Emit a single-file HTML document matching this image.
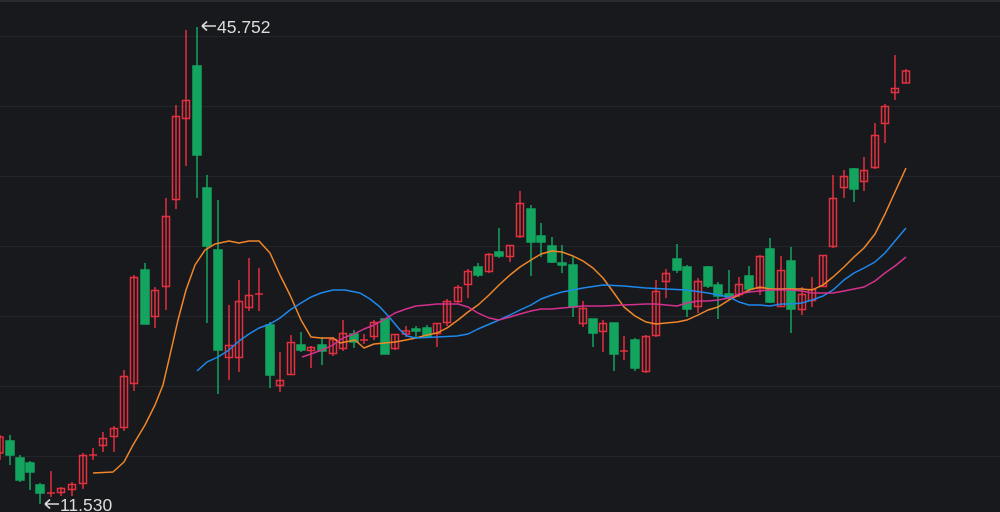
<!DOCTYPE html>
<html><head><meta charset="utf-8"><style>
html,body{margin:0;padding:0;background:#18191d;width:1000px;height:512px;overflow:hidden}
svg{display:block}
</style></head><body>
<svg width="1000" height="512" viewBox="0 0 1000 512" xmlns="http://www.w3.org/2000/svg">
<rect width="1000" height="512" fill="#18191d"/>
<rect width="1000" height="2" fill="#2a2b30"/>
<g stroke="#24252a" stroke-width="1">
<line x1="0" y1="36.5" x2="1000" y2="36.5"/><line x1="0" y1="106.5" x2="1000" y2="106.5"/><line x1="0" y1="176.5" x2="1000" y2="176.5"/><line x1="0" y1="246.5" x2="1000" y2="246.5"/><line x1="0" y1="316.5" x2="1000" y2="316.5"/><line x1="0" y1="386.5" x2="1000" y2="386.5"/><line x1="0" y1="456.5" x2="1000" y2="456.5"/>
</g>
<g fill="#13a55f" stroke="#13a55f" stroke-width="1.5">
<line x1="10" y1="435" x2="10" y2="465"/><rect x="6" y="441" width="8" height="14"/>
<line x1="20" y1="455" x2="20" y2="482"/><rect x="16" y="458" width="8" height="22"/>
<line x1="30" y1="461" x2="30" y2="490"/><rect x="26" y="463" width="8" height="9"/>
<line x1="40" y1="483" x2="40" y2="504"/><rect x="36" y="485" width="8" height="8"/>
<line x1="145" y1="263" x2="145" y2="324"/><rect x="141" y="270" width="8" height="54"/>
<line x1="197" y1="27" x2="197" y2="198"/><rect x="193" y="66" width="8" height="89"/>
<line x1="207" y1="175" x2="207" y2="323"/><rect x="203" y="188" width="8" height="58"/>
<line x1="218" y1="200" x2="218" y2="394"/><rect x="214" y="250" width="8" height="100"/>
<line x1="270" y1="322" x2="270" y2="388"/><rect x="266" y="325" width="8" height="50"/>
<line x1="301" y1="332" x2="301" y2="352"/><rect x="297" y="345" width="8" height="5"/>
<line x1="322" y1="337" x2="322" y2="365"/><rect x="318" y="345" width="8" height="6"/>
<line x1="354" y1="330" x2="354" y2="348"/><rect x="350" y="334" width="8" height="8"/>
<line x1="385" y1="319" x2="385" y2="354"/><rect x="381" y="319" width="8" height="35"/>
<line x1="416" y1="326" x2="416" y2="337"/><rect x="412" y="329" width="8" height="2"/>
<line x1="427" y1="325" x2="427" y2="337"/><rect x="423" y="328" width="8" height="8"/>
<line x1="478" y1="263" x2="478" y2="277"/><rect x="474" y="267" width="8" height="8"/>
<line x1="499" y1="228" x2="499" y2="258"/><rect x="495" y="252" width="8" height="4"/>
<line x1="531" y1="205" x2="531" y2="276"/><rect x="527" y="209" width="8" height="33"/>
<line x1="541" y1="223" x2="541" y2="257"/><rect x="537" y="236" width="8" height="6"/>
<line x1="552" y1="237" x2="552" y2="263"/><rect x="548" y="246" width="8" height="16"/>
<line x1="562" y1="245" x2="562" y2="273"/><rect x="558" y="263" width="8" height="2"/>
<line x1="573" y1="257" x2="573" y2="317"/><rect x="569" y="265" width="8" height="42"/>
<line x1="593" y1="319" x2="593" y2="347"/><rect x="589" y="319" width="8" height="14"/>
<line x1="614" y1="323" x2="614" y2="371"/><rect x="610" y="323" width="8" height="31"/>
<line x1="635" y1="338" x2="635" y2="371"/><rect x="631" y="340" width="8" height="28"/>
<line x1="677" y1="244" x2="677" y2="273"/><rect x="673" y="259" width="8" height="11"/>
<line x1="687" y1="265" x2="687" y2="317"/><rect x="683" y="267" width="8" height="42"/>
<line x1="708" y1="266" x2="708" y2="288"/><rect x="704" y="267" width="8" height="19"/>
<line x1="718" y1="282" x2="718" y2="319"/><rect x="714" y="285" width="8" height="11"/>
<line x1="729" y1="270" x2="729" y2="300"/><rect x="725" y="294" width="8" height="3"/>
<line x1="749" y1="266" x2="749" y2="293"/><rect x="745" y="276" width="8" height="13"/>
<line x1="770" y1="238" x2="770" y2="303"/><rect x="766" y="249" width="8" height="53"/>
<line x1="791" y1="247" x2="791" y2="333"/><rect x="787" y="261" width="8" height="48"/>
<line x1="854" y1="168" x2="854" y2="202"/><rect x="850" y="169" width="8" height="20"/>
</g>
<g fill="none" stroke="#e3313f" stroke-width="1.5">
<line x1="0" y1="435" x2="0" y2="460"/><rect x="-3" y="437" width="6" height="16"/>
<line x1="51" y1="471" x2="51" y2="497"/><line x1="47" y1="493" x2="55" y2="493"/>
<line x1="61" y1="487" x2="61" y2="496"/><rect x="57.5" y="488.5" width="7" height="4"/>
<line x1="72" y1="482" x2="72" y2="496"/><rect x="68.5" y="484.5" width="7" height="5"/>
<line x1="83" y1="453" x2="83" y2="489"/><rect x="79.5" y="455.5" width="7" height="28"/>
<line x1="93" y1="448" x2="93" y2="460"/><line x1="89" y1="455" x2="97" y2="455"/>
<line x1="103" y1="432" x2="103" y2="452"/><rect x="99.5" y="438.5" width="7" height="7"/>
<line x1="114" y1="426" x2="114" y2="452"/><rect x="110.5" y="428.5" width="7" height="8"/>
<line x1="124" y1="370" x2="124" y2="431"/><rect x="120.5" y="376.5" width="7" height="51"/>
<line x1="134" y1="275" x2="134" y2="391"/><rect x="130.5" y="277.5" width="7" height="106"/>
<line x1="155" y1="287" x2="155" y2="328"/><rect x="151.5" y="290.5" width="7" height="26"/>
<line x1="166" y1="198" x2="166" y2="310"/><rect x="162.5" y="216.5" width="7" height="70"/>
<line x1="176" y1="105" x2="176" y2="209"/><rect x="172.5" y="116.5" width="7" height="83"/>
<line x1="186" y1="30" x2="186" y2="166"/><rect x="182.5" y="100.5" width="7" height="18"/>
<line x1="229" y1="305" x2="229" y2="380"/><rect x="225.5" y="345.5" width="7" height="12"/>
<line x1="239" y1="280" x2="239" y2="372"/><rect x="235.5" y="301.5" width="7" height="56"/>
<line x1="249" y1="258" x2="249" y2="311"/><rect x="245.5" y="295.5" width="7" height="12"/>
<line x1="259" y1="268" x2="259" y2="311"/><line x1="255" y1="294" x2="263" y2="294"/>
<line x1="280" y1="352" x2="280" y2="392"/><rect x="276.5" y="380.5" width="7" height="5"/>
<line x1="291" y1="335" x2="291" y2="375"/><rect x="287.5" y="342.5" width="7" height="32"/>
<line x1="311" y1="346" x2="311" y2="368"/><rect x="307.5" y="347.5" width="7" height="3"/>
<line x1="333" y1="337" x2="333" y2="356"/><rect x="329.5" y="339.5" width="7" height="14"/>
<line x1="343" y1="320" x2="343" y2="351"/><rect x="339.5" y="333.5" width="7" height="15"/>
<line x1="364" y1="334" x2="364" y2="344"/><line x1="360" y1="340" x2="368" y2="340"/>
<line x1="374" y1="320" x2="374" y2="340"/><rect x="370.5" y="322.5" width="7" height="14"/>
<line x1="395" y1="334" x2="395" y2="350"/><rect x="391.5" y="334.5" width="7" height="14"/>
<line x1="406" y1="326" x2="406" y2="337"/><rect x="402.5" y="331" width="7" height="3"/>
<line x1="437" y1="323" x2="437" y2="347"/><rect x="433.5" y="323.5" width="7" height="10"/>
<line x1="447" y1="299" x2="447" y2="326"/><rect x="443.5" y="301.5" width="7" height="21"/>
<line x1="458" y1="285" x2="458" y2="303"/><rect x="454.5" y="287.5" width="7" height="14"/>
<line x1="468" y1="269" x2="468" y2="298"/><rect x="464.5" y="271.5" width="7" height="13"/>
<line x1="489" y1="253" x2="489" y2="273"/><rect x="485.5" y="254.5" width="7" height="17"/>
<line x1="510" y1="245" x2="510" y2="262"/><rect x="506.5" y="245.5" width="7" height="11"/>
<line x1="520" y1="191" x2="520" y2="238"/><rect x="516.5" y="203.5" width="7" height="33"/>
<line x1="583" y1="301" x2="583" y2="327"/><rect x="579.5" y="308.5" width="7" height="15"/>
<line x1="603" y1="320" x2="603" y2="352"/><rect x="599.5" y="323.5" width="7" height="8"/>
<line x1="624" y1="336" x2="624" y2="360"/><line x1="620" y1="351" x2="628" y2="351"/>
<line x1="646" y1="335" x2="646" y2="373"/><rect x="642.5" y="336.5" width="7" height="35"/>
<line x1="656" y1="280" x2="656" y2="337"/><rect x="652.5" y="291.5" width="7" height="44"/>
<line x1="666" y1="269" x2="666" y2="298"/><rect x="662.5" y="273.5" width="7" height="8"/>
<line x1="698" y1="278" x2="698" y2="313"/><rect x="694.5" y="281.5" width="7" height="25"/>
<line x1="739" y1="277" x2="739" y2="297"/><rect x="735.5" y="284.5" width="7" height="10"/>
<line x1="760" y1="255" x2="760" y2="295"/><rect x="756.5" y="256.5" width="7" height="32"/>
<line x1="781" y1="256" x2="781" y2="307"/><rect x="777.5" y="270.5" width="7" height="36"/>
<line x1="802" y1="287" x2="802" y2="315"/><rect x="798.5" y="294.5" width="7" height="15"/>
<line x1="812" y1="277" x2="812" y2="307"/><rect x="808.5" y="289.5" width="7" height="11"/>
<line x1="823" y1="255" x2="823" y2="287"/><rect x="819.5" y="255.5" width="7" height="31"/>
<line x1="833" y1="175" x2="833" y2="248"/><rect x="829.5" y="198.5" width="7" height="48"/>
<line x1="844" y1="170" x2="844" y2="198"/><rect x="840.5" y="176.5" width="7" height="11"/>
<line x1="864" y1="157" x2="864" y2="191"/><rect x="860.5" y="170.5" width="7" height="11"/>
<line x1="875" y1="123" x2="875" y2="169"/><rect x="871.5" y="135.5" width="7" height="32"/>
<line x1="885" y1="104" x2="885" y2="143"/><rect x="881.5" y="106.5" width="7" height="17"/>
<line x1="895" y1="55" x2="895" y2="100"/><rect x="891.5" y="88.5" width="7" height="4"/>
<line x1="906" y1="69" x2="906" y2="83"/><rect x="902.5" y="71" width="7" height="12"/>
</g>
<g fill="none" stroke-width="1.5" stroke-linejoin="round">
<polyline stroke="#f0862a" points="93,473 113,472 124,462 133,445 145,425 155,405 163,385 170,355 178,320 186,290 195,265 205,250 215,244 229,241 239,243 249,241 259,241 270,253 280,275 290,295 301,320 311,337 321,338 333,338 340,343 355,340 364,348 374,344 385,343 395,342 406,340 416,338 427,335 437,333 447,328 458,320 468,312 478,305 489,295 499,285 510,275 520,267 531,260 541,254 552,251 562,252 573,256 583,261 593,268 603,278 614,293 624,307 635,316 646,322 656,324 666,323 677,322 687,320 698,315 708,310 718,307 729,300 739,295 749,290 760,287 770,289 781,289 791,289 802,289 812,290 823,285 833,277 844,267 854,257 864,248 875,234 885,214 895,192 906,168"/>
<polyline stroke="#1e88ec" points="197,371 207,362 218,357 229,350 239,341 249,334 259,328 270,324 280,318 290,310 301,303 311,297 321,293 333,290 345,290 360,293 370,299 380,307 390,318 400,330 407,336 416,338 437,337 457,336 468,334 478,329 499,320 510,315 520,310 531,305 541,299 552,295 562,292 573,290 583,288 603,285 624,286 646,288 666,289 687,290 708,293 729,297 739,302 749,305 760,305 770,306 781,304 791,304 802,303 812,300 823,296 833,290 844,280 854,273 864,268 875,262 885,253 895,241 906,228"/>
<polyline stroke="#d4318f" points="302,357 311,354 322,350 333,345 343,338 354,334 364,329 374,325 385,319 395,313 406,309 416,306 427,305 437,304 447,304 458,304 468,307 478,313 489,318 499,320 510,317 520,314 531,311 541,309 552,309 562,308 573,307 583,306 603,306 624,305 646,304 656,304 666,305 677,306 687,303 698,301 708,301 718,300 729,298 739,294 749,292 760,291 770,290 781,290 791,290 802,291 812,293 823,293 833,293 844,291 854,289 864,287 875,281 885,273 895,266 906,257"/>
</g>
<g stroke="#dcdcdc" stroke-width="1.6" fill="none">
<path d="M202 26 H216 M202 26 L207 21.5 M202 26 L207 30.5"/>
<path d="M45 504 H59 M45 504 L50 499.5 M45 504 L50 508.5"/>
</g>
<g font-family="Liberation Sans, sans-serif" font-size="17.5" fill="#dcdcdc">
<text x="217" y="33">45.752</text>
<text x="60" y="511">11.530</text>
</g>
</svg>
</body></html>
